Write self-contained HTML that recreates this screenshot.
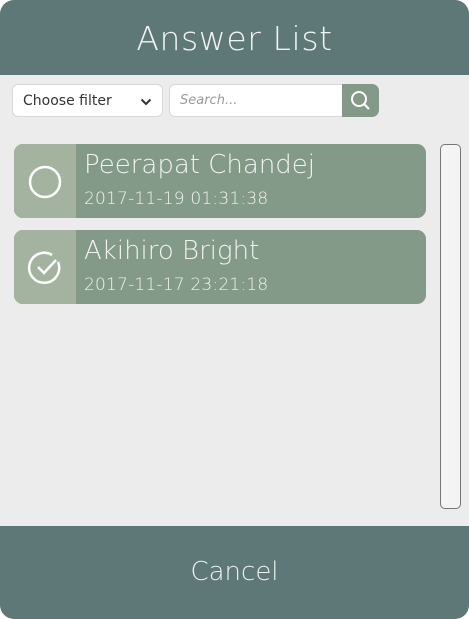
<!DOCTYPE html>
<html><head><style>
*{margin:0;padding:0;box-sizing:border-box}
body{width:469px;height:619px;background:#fff;overflow:hidden;font-family:"DejaVu Sans","Liberation Sans",sans-serif}
.wrap{position:absolute;left:0;top:0;width:469px;height:619px;background:#ececec;border-radius:14px;overflow:hidden}
.hdr{position:absolute;left:0;top:0;width:469px;height:75px;background:#5e7877;color:#f3f3f3;font-size:33px;text-align:center;line-height:78px;font-weight:300;letter-spacing:0.6px}
.ftr{position:absolute;left:0;top:526px;width:469px;height:93px;background:#5e7877;color:#eef0ef;font-size:26px;text-align:center;line-height:92px;font-weight:300}
.sel{position:absolute;left:12px;top:84px;width:151px;height:33px;background:#fff;border:1px solid #d8d8d8;border-radius:6px;font-size:14px;color:#333;line-height:33px;padding-left:10px}
.srch{position:absolute;left:169px;top:84px;width:174px;height:33px;background:#fff;border:1px solid #d8d8d8;border-radius:6px 0 0 6px;font-size:13px;color:#999;font-style:italic;line-height:31px;padding-left:10px}
.btn{position:absolute;left:342px;top:84px;width:37px;height:33px;background:#849a89;border-radius:0 7px 7px 0}
.card{position:absolute;left:14px;width:412px;height:74px;background:#849a89;border-radius:9px;overflow:hidden;color:#f2f2f0}
.card .l{position:absolute;left:0;top:0;width:62px;height:100%;background:#a3b39f}
.card .n{position:absolute;left:70px;top:6px;font-size:26px;font-weight:300}
.card .d{position:absolute;left:70px;top:45px;font-size:17px;font-weight:300;letter-spacing:0.2px}
.sb{position:absolute;left:440px;top:144px;width:21px;height:365px;border:1px solid #777;border-radius:5px;background:#f4f4f4}
</style></head><body><div class="wrap">
<div class="hdr">Answer List</div>
<div class="sel">Choose filter<svg style="position:absolute;right:10px;top:13px" width="12" height="8" viewBox="0 0 12 8"><path d="M1.5 1.5L6 6L10.5 1.5" fill="none" stroke="#333" stroke-width="2"/></svg></div>
<div class="srch">Search...</div>
<div class="btn"><svg width="37" height="33" viewBox="0 0 37 33"><circle cx="17" cy="15" r="7" fill="none" stroke="#fff" stroke-width="2"/><path d="M22 20L27 25" stroke="#fff" stroke-width="2.2"/></svg></div>
<div class="card" style="top:144px"><div class="l"><svg width="62" height="74"><circle cx="31" cy="38" r="15" fill="none" stroke="#fff" stroke-width="2.5"/></svg></div><div class="n">Peerapat Chandej</div><div class="d">2017-11-19 01:31:38</div></div>
<div class="card" style="top:230px"><div class="l"><svg width="62" height="74"><path d="M44 32A15 15 0 1 1 38 25" fill="none" stroke="#fff" stroke-width="2.5"/><path d="M24 37L30 43L42 30" fill="none" stroke="#fff" stroke-width="2.5"/></svg></div><div class="n">Akihiro Bright</div><div class="d">2017-11-17 23:21:18</div></div>
<div class="sb"></div>
<div class="ftr">Cancel</div>
</div></body></html>
